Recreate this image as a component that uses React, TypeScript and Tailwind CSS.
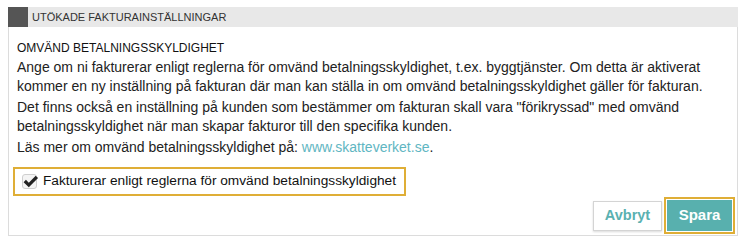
function App() {
  return (
    <div className="min-h-screen bg-white pt-[7px] pl-2 font-['Liberation_Sans',Arial,sans-serif] text-[#222]">
      <div className="w-[730px]">
        {/* Panel header */}
        <div className="flex h-5 bg-[#e8e8e8]">
          <div className="h-5 w-5 bg-[#555]"></div>
          <div className="ml-1 text-[11px] leading-5 text-[#333]">
            UTÖKADE FAKTURAINSTÄLLNINGAR
          </div>
        </div>

        {/* Panel body */}
        <div className="border-x border-b border-[#dcdcdc] pt-[14px] pb-px pr-[2px]">
          <div className="pl-2 pr-2">
            <h3 className="text-[12px] leading-[14px] text-[#111]">
              OMVÄND BETALNINGSSKYLDIGHET
            </h3>
            <p className="mt-[3px] text-[14px] leading-[19px]">
              Ange om ni fakturerar enligt reglerna för omvänd
              betalningsskyldighet, t.ex. byggtjänster. Om detta är aktiverat
              kommer en ny inställning på fakturan där man kan ställa in om
              omvänd betalningsskyldighet gäller för fakturan.
            </p>
            <p className="mt-[2px] text-[14px] leading-[19px]">
              Det finns också en inställning på kunden som bestämmer om
              fakturan skall vara "förikryssad" med omvänd
              betalningsskyldighet när man skapar fakturor till den specifika
              kunden.
            </p>
            <p className="mt-[2px] text-[14px] leading-[19px]">
              Läs mer om omvänd betalningsskyldighet på:{" "}
              <a className="text-[#5fb6c2]" href="#">
                www.skatteverket.se
              </a>
              .
            </p>
          </div>

          {/* Checkbox option */}
          <div className="ml-[4px] mt-[10px] flex h-[29px] w-[393px] items-center border-2 border-[#dfae36] pl-[7px]">
            <span className="relative h-[15px] w-[15px] shrink-0 rounded-[3px] border border-[#cfcfcf] bg-[#f4f4f4]">
              {/* heavy check mark */}
              <svg
                viewBox="0 0 16 16"
                className="absolute left-[-1px] top-[-2px] h-[17px] w-[17px]"
              >
                <path
                  d="M1.5 8.6 L3.7 6.4 L6.4 9.1 L12.9 2.6 L15.1 4.8 L6.4 13.5 Z"
                  fill="#222"
                />
              </svg>
            </span>
            <span className="ml-[6px] whitespace-nowrap text-[13.7px] text-[#111]">
              Fakturerar enligt reglerna för omvänd betalningsskyldighet
            </span>
          </div>

          {/* Actions */}
          <div className="mt-[1px] flex items-center justify-end gap-[2px]">
            <button className="h-[30px] w-[69px] border border-[#d4d4d4] bg-white text-[14.5px] font-bold text-[#5ab1b1] shadow-[0_1px_2px_rgba(0,0,0,0.15)]">
              Avbryt
            </button>
            <div className="border-2 border-[#dfae36] p-px">
              <button className="h-[31px] w-[65px] bg-[#58b0ae] text-[15px] font-bold text-white">
                Spara
              </button>
            </div>
          </div>
        </div>
      </div>
    </div>
  );
}

export default App;
